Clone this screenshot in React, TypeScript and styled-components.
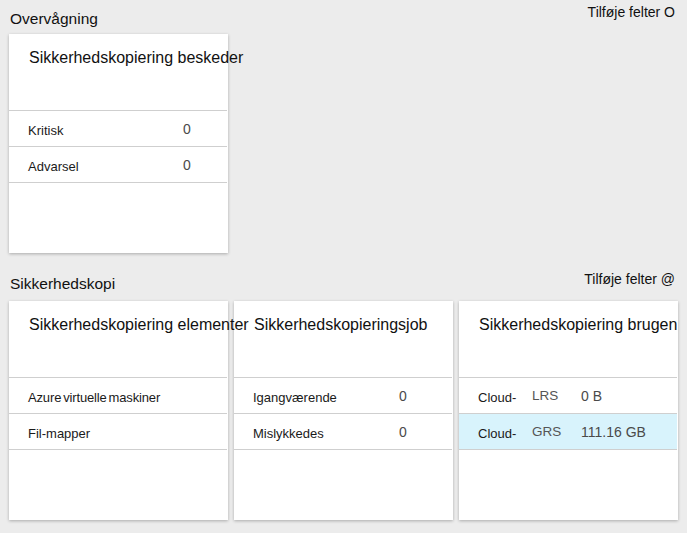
import React from "react";
import styled, { createGlobalStyle } from "styled-components";

const GlobalStyle = createGlobalStyle`
  html, body {
    margin: 0;
    padding: 0;
    background: #ececec;
  }
  body {
    font-family: "Liberation Sans", Arial, sans-serif;
    color: #111;
  }
`;

const Page = styled.div`
  width: 687px;
  height: 533px;
  box-sizing: border-box;
  padding: 0 9px;
  overflow: hidden;
`;

const Section = styled.section<{ $top?: number }>`
  margin-top: ${(p) => p.$top ?? 0}px;
`;

const SectionHeader = styled.div`
  display: flex;
  justify-content: space-between;
  align-items: flex-start;
  height: 34px;
  padding-right: 3px;
`;

const SectionTitle = styled.div<{ $pad: number }>`
  font-size: 15.5px;
  padding: ${(p) => p.$pad}px 0 0 1px;
  color: #111;
`;

const AddTiles = styled.div`
  font-size: 14px;
  padding-top: 4px;
  color: #111;
`;

const CardRow = styled.div`
  display: flex;
  gap: 6px;
`;

const Card = styled.div`
  flex: none;
  width: 219px;
  height: 219px;
  background: #fff;
  box-shadow: 0 1px 3px rgba(0, 0, 0, 0.28);
  display: flex;
  flex-direction: column;
`;

const CardTitle = styled.div`
  position: relative;
  z-index: 1;
  height: 76px;
  box-sizing: border-box;
  padding: 15px 0 0 20px;
  font-size: 16px;
  white-space: nowrap;
  color: #111;
`;

const List = styled.div`
  border-bottom: 1px solid #cfcfcf;
  margin-right: 1px;
`;

const Row = styled.div<{ $selected?: boolean }>`
  display: flex;
  align-items: center;
  height: 36px;
  box-sizing: border-box;
  border-top: 1px solid #cfcfcf;
  padding-left: 19px;
  background: ${(p) => (p.$selected ? "#d8f3fc" : "transparent")};
`;

const Label = styled.div<{ $width: number; $tight?: boolean }>`
  width: ${(p) => p.$width}px;
  flex: none;
  font-size: 13px;
  padding-top: 3px;
  color: #1a1a1a;
  white-space: nowrap;
  word-spacing: ${(p) => (p.$tight ? "-1.5px" : "0")};
  letter-spacing: ${(p) => (p.$tight ? "-0.15px" : "0")};
`;

const Tier = styled.div`
  width: 49px;
  flex: none;
  font-size: 13.5px;
  color: #555;
`;

const Value = styled.div`
  font-size: 14px;
  color: #4a4a4a;
  white-space: nowrap;
`;

type Item = { label: string; value?: string; tier?: string; tight?: boolean; selected?: boolean };

const Tile = ({
  title,
  items,
  labelWidth,
}: {
  title: string;
  items: Item[];
  labelWidth: number;
}) => (
  <Card>
    <CardTitle>{title}</CardTitle>
    <List>
      {items.map((it, i) => (
        <Row key={i} $selected={it.selected}>
          <Label $width={labelWidth} $tight={it.tight}>
            {it.label}
          </Label>
          {it.tier !== undefined && <Tier>{it.tier}</Tier>}
          {it.value !== undefined && <Value>{it.value}</Value>}
        </Row>
      ))}
    </List>
  </Card>
);

export default function App() {
  return (
    <>
      <GlobalStyle />
      <Page>
        <Section>
          <SectionHeader>
            <SectionTitle $pad={10}>Overvågning</SectionTitle>
            <AddTiles>Tilføje felter O</AddTiles>
          </SectionHeader>
          <CardRow>
            <Tile
              title="Sikkerhedskopiering beskeder"
              labelWidth={155}
              items={[
                { label: "Kritisk", value: "0" },
                { label: "Advarsel", value: "0" },
              ]}
            />
          </CardRow>
        </Section>
        <Section $top={14}>
          <SectionHeader>
            <SectionTitle $pad={8}>Sikkerhedskopi</SectionTitle>
            <AddTiles>Tilføje felter @</AddTiles>
          </SectionHeader>
          <CardRow>
            <Tile
              title="Sikkerhedskopiering elementer"
              labelWidth={150}
              items={[
                { label: "Azure virtuelle maskiner", tight: true },
                { label: "Fil-mapper" },
              ]}
            />
            <Tile
              title="Sikkerhedskopieringsjob"
              labelWidth={146}
              items={[
                { label: "Igangværende", value: "0" },
                { label: "Mislykkedes", value: "0" },
              ]}
            />
            <Tile
              title="Sikkerhedskopiering brugen"
              labelWidth={54}
              items={[
                { label: "Cloud-", tier: "LRS", value: "0 B" },
                { label: "Cloud-", tier: "GRS", value: "111.16 GB", selected: true },
              ]}
            />
          </CardRow>
        </Section>
      </Page>
    </>
  );
}
